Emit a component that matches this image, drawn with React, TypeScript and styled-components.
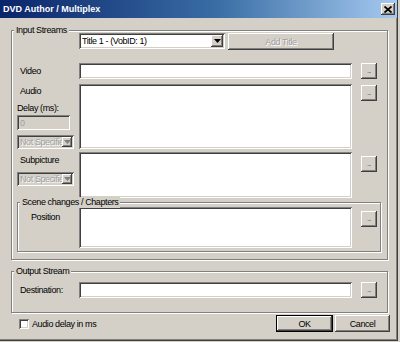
import React from 'react';
import styled, { createGlobalStyle, css } from 'styled-components';

const GlobalStyle = createGlobalStyle`
  html, body {
    margin: 0;
    padding: 0;
    background: #d4d0c8;
  }
  body {
    font-family: "Liberation Sans", Arial, sans-serif;
    font-size: 9px;
    letter-spacing: -0.4px;
    color: #000;
  }
`;

const raised = css`
  box-shadow: inset -1px -1px #404040, inset 1px 1px #ffffff, inset -2px -2px #808080;
`;

const sunken = css`
  box-shadow: inset 1px 1px #808080, inset -1px -1px #ffffff, inset 2px 2px #404040,
    inset -2px -2px #d4d0c8;
`;

const Window = styled.div`
  width: 398px;
  height: 341px;
  box-sizing: border-box;
  display: flex;
  flex-direction: column;
  background: #d4d0c8;
  border-right: 1px solid #404040;
  border-bottom: 1px solid #404040;
  box-shadow: inset -1px -1px #808080;
`;

const TitleBar = styled.div`
  height: 18px;
  display: flex;
  align-items: center;
  justify-content: space-between;
  padding: 0 2px 0 3px;
  background: linear-gradient(to right, #0a246a 0%, #3a6ea5 55%, #a6caf0 100%);
`;

const TitleText = styled.span`
  color: #fff;
  font-weight: bold;
  font-size: 9px;
  letter-spacing: 0;
`;

const CloseButton = styled.div`
  width: 14px;
  height: 12px;
  display: flex;
  align-items: center;
  justify-content: center;
  background: #d4d0c8;
  ${raised};
`;

const Body = styled.div`
  padding: 12px 9px 0 11px;
  display: flex;
  flex-direction: column;
`;

const GroupBox = styled.div<{ $pt: number; $pb: number; $pl: number; $pr: number; $mt?: number }>`
  position: relative;
  border: 1px solid #808080;
  box-shadow: inset 1px 1px #fff, 1px 1px #fff;
  padding: ${(p) => `${p.$pt}px ${p.$pr}px ${p.$pb}px ${p.$pl}px`};
  margin-top: ${(p) => p.$mt || 0}px;
  display: flex;
  flex-direction: column;
`;

const Legend = styled.span`
  position: absolute;
  top: -6px;
  left: 2px;
  padding: 0 2px;
  line-height: 11px;
  background: #d4d0c8;
`;

// label column + field + "..." button; the 9px gap sits between each column
const FieldRow = styled.div<{ $labelWidth: number; $mt?: number }>`
  display: grid;
  grid-template-columns: ${(p) => p.$labelWidth - 9}px 273px 16px;
  column-gap: 9px;
  align-items: start;
  margin-top: ${(p) => p.$mt || 0}px;
`;

const LabelStack = styled.div`
  display: flex;
  flex-direction: column;
  align-items: flex-start;
`;

const Label = styled.span<{ $indent?: number; $pt?: number; $mt?: number }>`
  line-height: 11px;
  padding-left: ${(p) => p.$indent ?? 3}px;
  padding-top: ${(p) => p.$pt || 0}px;
  margin-top: ${(p) => p.$mt || 0}px;
  white-space: nowrap;
`;

const TextField = styled.div<{ $height: number; $width?: number; $disabled?: boolean; $mt?: number }>`
  height: ${(p) => p.$height}px;
  width: ${(p) => (p.$width ? `${p.$width}px` : 'auto')};
  margin-top: ${(p) => p.$mt || 0}px;
  box-sizing: border-box;
  padding: 3px 3px 0;
  line-height: 10px;
  background: ${(p) => (p.$disabled ? '#d4d0c8' : '#ffffff')};
  color: ${(p) => (p.$disabled ? '#a0a0a0' : '#000')};
  ${sunken};
`;

const Combo = styled.div<{ $width: number; $height: number; $disabled?: boolean; $mt?: number }>`
  width: ${(p) => p.$width}px;
  height: ${(p) => p.$height}px;
  margin-top: ${(p) => p.$mt || 0}px;
  box-sizing: border-box;
  padding: 2px;
  display: flex;
  align-items: stretch;
  background: ${(p) => (p.$disabled ? '#d4d0c8' : '#ffffff')};
  ${sunken};
`;

const ComboText = styled.span<{ $disabled?: boolean }>`
  flex: 1;
  overflow: hidden;
  white-space: nowrap;
  padding-left: 1px;
  line-height: ${(p) => (p.$disabled ? '10px' : '12px')};
  color: ${(p) => (p.$disabled ? '#a0a0a0' : '#000')};
  text-shadow: ${(p) => (p.$disabled ? '1px 1px 0 #fff' : 'none')};
`;

const ComboArrow = styled.div<{ $width: number }>`
  width: ${(p) => p.$width}px;
  display: flex;
  align-items: center;
  justify-content: center;
  background: #d4d0c8;
  ${raised};
`;

const BrowseButton = styled.div<{ $offset?: number }>`
  width: 16px;
  height: 16px;
  margin-top: ${(p) => p.$offset || 0}px;
  box-sizing: border-box;
  display: flex;
  align-items: center;
  justify-content: center;
  font-size: 6px;
  letter-spacing: -0.5px;
  line-height: 6px;
  background: #d4d0c8;
  ${raised};
`;

const TopControls = styled.div`
  display: flex;
  gap: 3px;
`;

const PushButton = styled.div<{ $width: number; $default?: boolean; $disabled?: boolean }>`
  width: ${(p) => p.$width}px;
  height: 17px;
  box-sizing: border-box;
  display: flex;
  align-items: center;
  justify-content: center;
  background: #d4d0c8;
  color: ${(p) => (p.$disabled ? '#a0a0a0' : '#000')};
  text-shadow: ${(p) => (p.$disabled ? '1px 1px 0 #fff' : 'none')};
  border: ${(p) => (p.$default ? '1px solid #000' : 'none')};
  ${raised};
`;

const Footer = styled.div`
  margin-top: 2px;
  margin-right: -2px;
  display: flex;
  align-items: center;
  justify-content: space-between;
`;

const CheckRow = styled.div`
  display: flex;
  align-items: center;
  gap: 3px;
  padding-left: 8px;
  padding-top: 1px;
`;

const CheckBox = styled.div`
  width: 10px;
  height: 10px;
  box-sizing: border-box;
  background: #fff;
  ${sunken};
`;

const ButtonPair = styled.div`
  display: flex;
  gap: 2px;
`;

const ArrowIcon: React.FC<{ color?: string }> = ({ color = '#000' }) => (
  <svg width="7" height="4" viewBox="0 0 7 4">
    <path d="M0 0h7L3.5 4z" fill={color} />
  </svg>
);

const CloseIcon: React.FC = () => (
  <svg width="8" height="7" viewBox="0 0 8 7">
    <path d="M0.5 0.5L7.5 6.5M7.5 0.5L0.5 6.5" stroke="#000" strokeWidth="1.8" />
  </svg>
);

const App: React.FC = () => {
  return (
    <>
      <GlobalStyle />
      <Window>
        <TitleBar>
          <TitleText>DVD Author / Multiplex</TitleText>
          <CloseButton>
            <CloseIcon />
          </CloseButton>
        </TitleBar>

        <Body>
          {/* Input streams */}
          <GroupBox $pt={2} $pb={7} $pl={5} $pr={6}>
            <Legend>Input Streams</Legend>

            <FieldRow $labelWidth={62}>
              <span />
              <TopControls>
                <Combo $width={146} $height={16}>
                  <ComboText>Title 1 - (VobID: 1)</ComboText>
                  <ComboArrow $width={12}>
                    <ArrowIcon />
                  </ComboArrow>
                </Combo>
                <PushButton $width={106} $disabled>
                  Add Title
                </PushButton>
              </TopControls>
            </FieldRow>

            <FieldRow $labelWidth={62} $mt={13}>
              <Label $pt={3}>Video</Label>
              <TextField $height={16} />
              <BrowseButton>...</BrowseButton>
            </FieldRow>

            <FieldRow $labelWidth={62} $mt={5}>
              <LabelStack>
                <Label $pt={2}>Audio</Label>
                <Label $indent={0} $mt={6}>
                  Delay (ms):
                </Label>
                <TextField $height={15} $width={53} $disabled $mt={1}>
                  0
                </TextField>
                <Combo $width={57} $height={14} $disabled $mt={5}>
                  <ComboText $disabled>Not Specified</ComboText>
                  <ComboArrow $width={10}>
                    <ArrowIcon color="#808080" />
                  </ComboArrow>
                </Combo>
              </LabelStack>
              <TextField $height={65} />
              <BrowseButton $offset={1}>...</BrowseButton>
            </FieldRow>

            <FieldRow $labelWidth={62} $mt={3}>
              <LabelStack>
                <Label $pt={3}>Subpicture</Label>
                <Combo $width={57} $height={14} $disabled $mt={6}>
                  <ComboText $disabled>Not Specified</ComboText>
                  <ComboArrow $width={10}>
                    <ArrowIcon color="#808080" />
                  </ComboArrow>
                </Combo>
              </LabelStack>
              <TextField $height={46} />
              <BrowseButton $offset={4}>...</BrowseButton>
            </FieldRow>

            {/* Scene changes */}
            <GroupBox $pt={4} $pb={3} $pl={0} $pr={4} $mt={4}>
              <Legend>Scene changes / Chapters</Legend>
              <FieldRow $labelWidth={61}>
                <Label $indent={13} $pt={5}>
                  Position
                </Label>
                <TextField $height={41} />
                <BrowseButton $offset={4}>...</BrowseButton>
              </FieldRow>
            </GroupBox>
          </GroupBox>

          {/* Output stream */}
          <GroupBox $pt={10} $pb={14} $pl={5} $pr={6} $mt={11}>
            <Legend>Output Stream</Legend>
            <FieldRow $labelWidth={62}>
              <Label $pt={3}>Destination:</Label>
              <TextField $height={16} />
              <BrowseButton>...</BrowseButton>
            </FieldRow>
          </GroupBox>

          <Footer>
            <CheckRow>
              <CheckBox />
              <span>Audio delay in ms</span>
            </CheckRow>
            <ButtonPair>
              <PushButton $width={57} $default>
                OK
              </PushButton>
              <PushButton $width={55}>Cancel</PushButton>
            </ButtonPair>
          </Footer>
        </Body>
      </Window>
    </>
  );
};

export default App;
